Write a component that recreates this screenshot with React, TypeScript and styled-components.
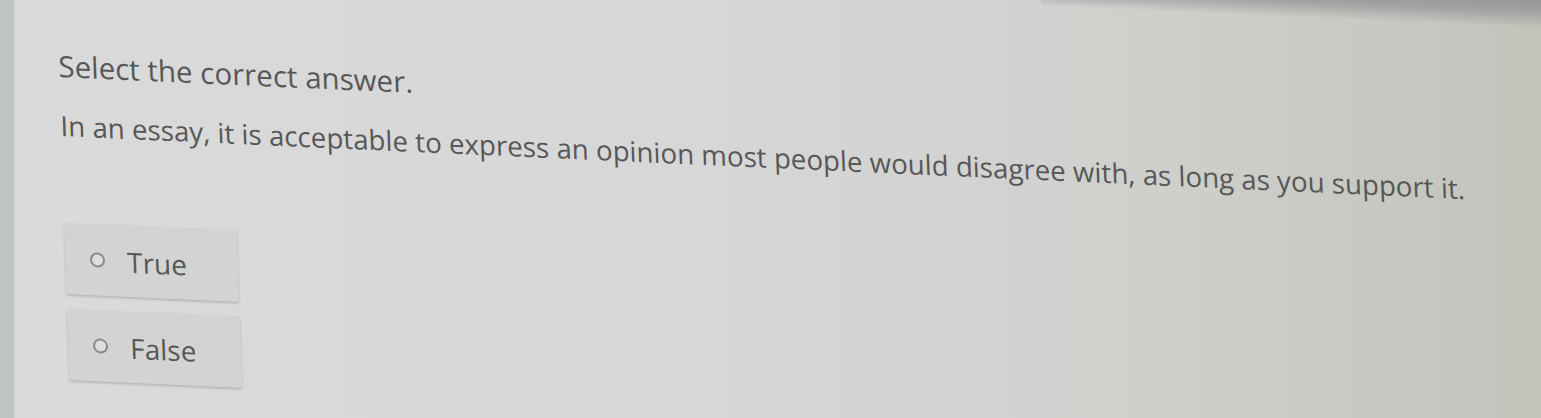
import React from "react";
import styled, { createGlobalStyle } from "styled-components";

const GlobalStyle = createGlobalStyle`
  html, body {
    margin: 0;
    padding: 0;
    width: 100%;
    height: 100%;
    overflow: hidden;
  }
  body {
    font-family: "Open Sans", "Noto Sans", sans-serif;
    background: #d6d6d6;
  }
  #root {
    height: 100%;
  }
`;

const Screen = styled.div`
  display: flex;
  width: 1541px;
  height: 418px;
  overflow: hidden;
  background:
    linear-gradient(182.5deg, #979797 0px, #a2a2a2 12px, rgba(200, 200, 200, 0) 28px) right top / 500px 70px no-repeat,
    linear-gradient(to right, #dadada 0%, #d7d7d7 45%, #cfd0cc 75%, #c2c3bb 100%);
`;

const Rail = styled.div`
  flex: none;
  width: 14px;
  background: #bec5c3;
  box-shadow: 1px 0 0 #d0d4d3;
`;

const Sheet = styled.main`
  flex: 1;
  padding: 49px 0 0 44px;
  transform: matrix(1, 0.045, 0.035, 1, 0, 0);
  transform-origin: 44px 57px;
`;

const Prompt = styled.p`
  margin: 0;
  font-size: 29.5px;
  font-weight: 500;
  line-height: 34px;
  color: #575757;
  white-space: nowrap;
`;

const Question = styled(Prompt)`
  margin-top: 25px;
  font-size: 27.7px;
`;

const Choices = styled.div`
  display: flex;
  flex-direction: column;
  gap: 15px;
  margin-top: 81px;
`;

const Choice = styled.label`
  display: flex;
  align-items: center;
  gap: 22px;
  width: 173px;
  height: 71px;
  box-sizing: border-box;
  padding-left: 25px;
  background: #d3d3d3;
  border-radius: 3px;
  box-shadow: 0 2px 2px rgba(0, 0, 0, 0.13), 0 0 0 1px rgba(0, 0, 0, 0.025);
  cursor: pointer;
`;

const Radio = styled.span`
  flex: none;
  width: 15px;
  height: 15px;
  box-sizing: border-box;
  border: 2px solid #8a8a8a;
  border-radius: 50%;
  background: #dedede;
`;

const ChoiceText = styled.span`
  font-size: 28px;
  font-weight: 500;
  line-height: 34px;
  color: #575757;
`;

const options = ["True", "False"];

export default function App() {
  return (
    <>
      <GlobalStyle />
      <Screen>
        <Rail />
        <Sheet>
          <Prompt>Select the correct answer.</Prompt>
          <Question>
            In an essay, it is acceptable to express an opinion most people would disagree with, as long as you support it.
          </Question>
          <Choices>
            {options.map((o) => (
              <Choice key={o}>
                <Radio />
                <ChoiceText>{o}</ChoiceText>
              </Choice>
            ))}
          </Choices>
        </Sheet>
      </Screen>
    </>
  );
}
